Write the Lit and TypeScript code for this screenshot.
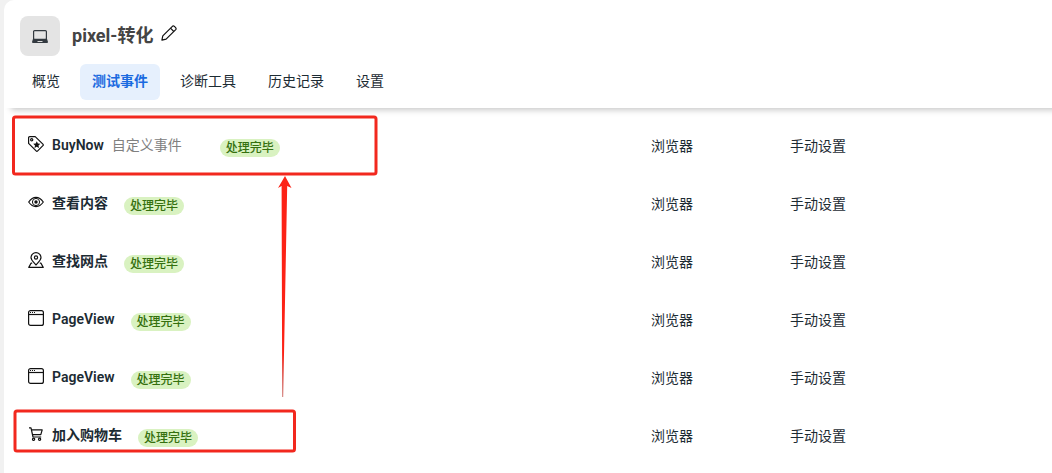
import { LitElement, html, css, svg, nothing } from "lit";
import { customElement, property, state } from "lit/decorators.js";
import { classMap } from "lit/directives/class-map.js";

type IconName = "tag" | "eye" | "pin" | "window" | "cart";

interface EventRow {
  icon: IconName;
  name: string;
  note?: string;
  status: string;
  source: string;
  setup: string;
}

const icons = {
  tag: svg`
    <path d="M1.7 .6H7.2L14.9 8.1Q15.7 8.9 14.9 9.7L9.7 14.9Q8.9 15.7 8.1 14.9L.6 7.4V1.7Q.6 .6 1.7 .6Z"/>
    <circle cx="3.7" cy="3.7" r="1.1"/>
    <path class="solid" d="M8.8 5.2L9.9 7.5L12.3 7.8L10.5 9.5L11 12L8.8 10.8L6.5 12L7 9.5L5.2 7.8L7.7 7.5Z"/>`,
  eye: svg`
    <path d="M.7 8C3 4.7 5.3 3.4 8 3.4S13 4.7 15.3 8C13 11.3 10.7 12.6 8 12.6S3 11.3 .7 8Z"/>
    <circle cx="8" cy="8" r="3.6" stroke-width="1"/>
    <circle class="solid" cx="8" cy="8" r="1.7"/>`,
  pin: svg`
    <path d="M8 13C6.2 10.6 3 8.5 3 5.6A5 5 0 0 1 13 5.6C13 8.5 9.8 10.6 8 13Z"/>
    <circle cx="8" cy="5.5" r="1.6"/>
    <path d="M4.2 11.2H3L.8 15.4H15.2L13 11.2H11.8"/>`,
  window: svg`
    <rect x=".6" y=".6" width="14.8" height="14.8" rx="2"/>
    <path d="M.6 4.5H15.4"/>
    <path d="M2 2.5H3M4 2.5H5M6 2.5H7"/>`,
  cart: svg`
    <path d="M1 1.9H3L5 11H13.2M3.6 3.9H14.2L12.8 8.6H4.6"/>
    <circle cx="5.6" cy="13.3" r="1.1"/>
    <circle cx="11.6" cy="13.3" r="1.1"/>`,
};

@customElement("event-icon")
export class EventIcon extends LitElement {
  @property() name: IconName = "window";

  static styles = css`
    :host {
      display: block;
      width: 16px;
      height: 16px;
    }
    svg {
      display: block;
      fill: none;
      stroke: #111;
      stroke-width: 1.2;
      stroke-linejoin: round;
    }
    .solid {
      fill: #111;
      stroke: none;
    }
  `;

  render() {
    return html`<svg width="16" height="16" viewBox="0 0 16 16" aria-hidden="true">${icons[this.name]}</svg>`;
  }
}

@customElement("app-root")
export class AppRoot extends LitElement {
  @state() private tab = "测试事件";

  private tabs = ["概览", "测试事件", "诊断工具", "历史记录", "设置"];

  private rows: EventRow[] = (
    [
      ["tag", "BuyNow", "自定义事件"],
      ["eye", "查看内容"],
      ["pin", "查找网点"],
      ["window", "PageView"],
      ["window", "PageView"],
      ["cart", "加入购物车"],
    ] as [IconName, string, string?][]
  ).map(([icon, name, note]) => ({
    icon,
    name,
    note,
    status: "处理完毕",
    source: "浏览器",
    setup: "手动设置",
  }));

  static styles = css`
    :host {
      display: block;
      box-sizing: border-box;
      min-height: 100vh;
      padding-left: 4px;
      background: #f1f1f1;
      color: #1c2b33;
      font: 14px/20px Roboto, "Noto Sans CJK SC", sans-serif;
    }
    .panel {
      position: relative;
      box-sizing: border-box;
      min-height: 100vh;
      background: #fff;
      border-top-left-radius: 10px;
      overflow: hidden;
    }
    .header {
      padding: 16px 16px 8px;
      box-shadow: 7px 2px 6px rgba(0, 0, 0, 0.22);
    }
    .heading {
      display: flex;
      align-items: center;
      gap: 8px;
    }
    .device {
      display: grid;
      place-items: center;
      width: 40px;
      height: 40px;
      margin-right: 4px;
      border-radius: 8px;
      background: #e4e4e4;
    }
    h1 {
      margin: 0;
      color: #444;
      font-size: 18px;
      line-height: 24px;
      font-weight: 700;
    }
    button {
      border: 0;
      background: none;
      font: inherit;
      color: inherit;
      cursor: pointer;
    }
    .edit {
      padding: 0 0 6px;
    }
    .edit svg,
    .device svg {
      display: block;
    }
    .tabs {
      display: flex;
      gap: 8px;
      margin-top: 8px;
    }
    .tab {
      height: 36px;
      padding: 0 12px 2px;
      border-radius: 6px;
    }
    .tab.active {
      background: #e6f0fd;
      color: #1a6ae0;
      font-weight: 700;
    }
    table {
      width: 100%;
      margin-top: 9px;
      border-collapse: collapse;
      table-layout: fixed;
    }
    .source {
      width: 139px;
    }
    .setup {
      width: 262px;
    }
    th,
    td {
      height: 58px;
      padding: 0;
      text-align: left;
      font-weight: 400;
    }
    .event {
      display: flex;
      align-items: center;
      padding-left: 24px;
    }
    .event event-icon {
      margin-right: 8px;
      padding-bottom: 4px;
    }
    .name {
      padding-bottom: 2px;
      font-weight: 600;
    }
    .note {
      margin: 0 22px 0 8px;
      padding-bottom: 2px;
      color: #808080;
    }
    .badge {
      margin: 3px 0 0 16px;
      padding: 0 6px;
      border-radius: 9px;
      background: #d9f2c1;
      color: #35700f;
      font-size: 12px;
      line-height: 18px;
      font-weight: 500;
    }
    .marks {
      position: absolute;
      top: 0;
      left: 0;
      pointer-events: none;
    }
  `;

  render() {
    return html`
      <main class="panel">
        <header class="header">
          <div class="heading">
            <span class="device">
              <svg width="16" height="16" viewBox="0 0 16 16" aria-hidden="true">
                <rect x="1.6" y="2.6" width="12.8" height="9" rx="1" fill="none" stroke="#333a40" stroke-width="1.2" />
                <path d="M1 10.8H15L16 14Q16 15 15 15H1Q0 15 0 14Z" fill="#333a40" />
                <path d="M5.5 13.5H10.5" stroke="#ddd" />
              </svg>
            </span>
            <h1>pixel-转化</h1>
            <button class="edit" aria-label="编辑名称">
              <svg width="16" height="16" viewBox="0 0 16 16" fill="none" stroke="#111" stroke-width="1.2" stroke-linejoin="round" aria-hidden="true">
                <path d="M.9 15.1L1.8 10.9L11.4 1.3Q12.4 .5 13.4 1.4L14.6 2.6Q15.5 3.6 14.7 4.6L5.1 14.2Z" />
                <path d="M9.5 3.2L12.8 6.5" />
              </svg>
            </button>
          </div>
          <nav class="tabs" role="tablist">
            ${this.tabs.map(
              (t) => html`<button
                role="tab"
                aria-selected=${t === this.tab}
                class=${classMap({ tab: true, active: t === this.tab })}
                @click=${() => (this.tab = t)}
              >${t}</button>`
            )}
          </nav>
        </header>
        <table>
          <colgroup>
            <col />
            <col class="source" />
            <col class="setup" />
          </colgroup>
          <tbody>
            ${this.rows.map(
              (r) => html`<tr>
                <th scope="row">
                  <div class="event">
                    <event-icon name=${r.icon}></event-icon>
                    <span class="name">${r.name}</span>
                    ${r.note ? html`<span class="note">${r.note}</span>` : nothing}
                    <span class="badge">${r.status}</span>
                  </div>
                </th>
                <td>${r.source}</td>
                <td>${r.setup}</td>
              </tr>`
            )}
          </tbody>
        </table>
        <svg class="marks" width="400" height="473" viewBox="0 0 400 473" aria-hidden="true">
          <defs>
            <linearGradient id="tail" x1="0" y1="0" x2="0" y2="1">
              <stop offset="0.8" stop-color="#fc2216" />
              <stop offset="1" stop-color="#b01810" stop-opacity="0.6" />
            </linearGradient>
          </defs>
          <g fill="none" stroke="#f2281e" stroke-width="3">
            <rect x="9.5" y="117" width="362.5" height="57" rx="2" />
            <rect x="11" y="411" width="279.5" height="40" rx="2" />
          </g>
          <path d="M281 176L287.5 188L283.2 186L279.2 397H278.2L277.6 186L274 188Z" fill="url(#tail)" />
        </svg>
      </main>
    `;
  }
}
